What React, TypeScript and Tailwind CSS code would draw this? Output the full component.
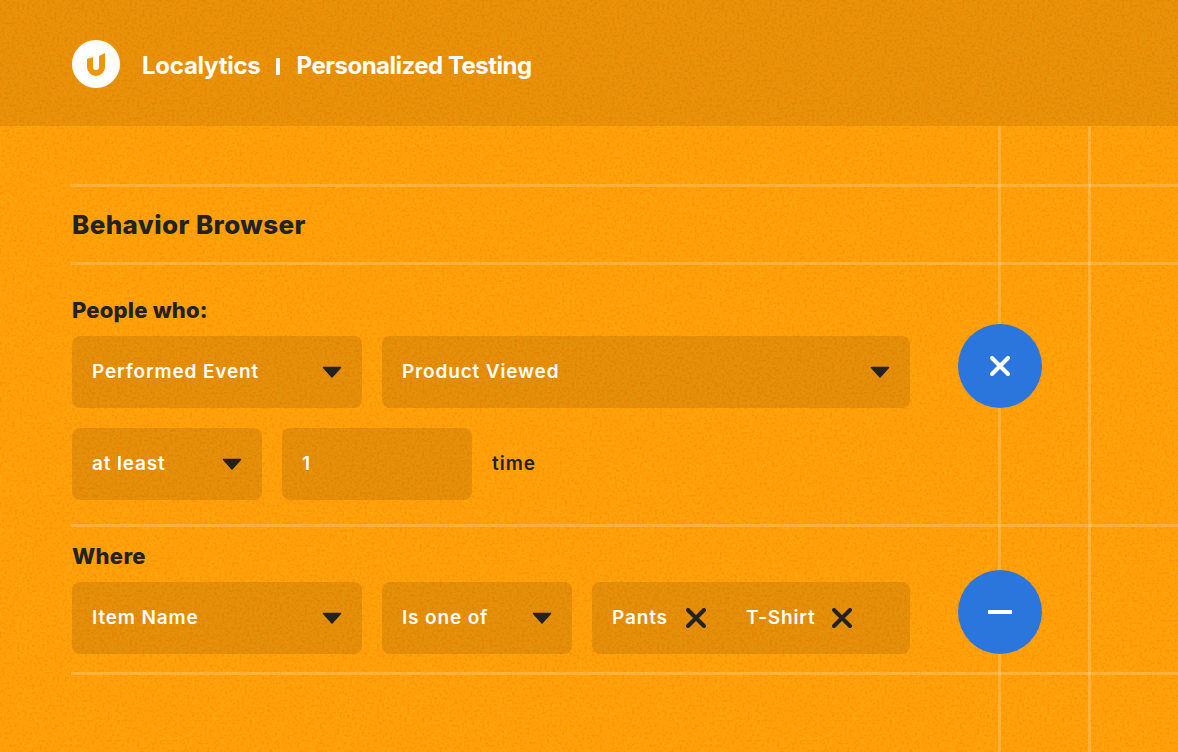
import React from 'react';

const fontFamily = 'font-["Inter",_"Liberation_Sans",_sans-serif]';

const Caret = () => (
  <svg width="20" height="12" viewBox="0 0 20 12" className="shrink-0">
    <path d="M1.500 1.500h17L10 11z" fill="#222222" stroke="#222222" strokeWidth="1.500" strokeLinejoin="round" />
  </svg>
);

const Cross = ({ color = '#222222' }: { color?: string }) => (
  <svg width="20" height="20" viewBox="0 0 20 20" className="shrink-0">
    <path d="M2 2l16 16M18 2L2 18" stroke={color} strokeWidth="4" strokeLinecap="round" fill="none" />
  </svg>
);

const Select = ({ label, width }: { label: string; width: string }) => (
  <div className={`${width} h-[72px] rounded-lg bg-black/[0.11] flex items-center justify-between pl-5 pr-5`}>
    <span className="text-[19px] font-semibold text-white tracking-[0.85px]">{label}</span>
    <Caret />
  </div>
);

const RoundButton = ({ children }: { children: React.ReactNode }) => (
  <div className="w-[84px] h-[84px] shrink-0 rounded-full bg-[#2b76dc] flex items-center justify-center">
    {children}
  </div>
);

const Rule = () => <div className="h-[3px] bg-white/20" />;

export default function App() {
  return (
    <div className={`relative w-[1178px] h-[752px] overflow-hidden bg-[#ffa30a] text-[#222222] ${fontFamily}`}>
      {/* paper grain under the content, tinted so it darkens without greying */}
      <svg className="absolute inset-0 pointer-events-none opacity-25" width="1178" height="752">
        <filter id="grain" x="0" y="0" width="100%" height="100%" colorInterpolationFilters="sRGB">
          <feTurbulence type="fractalNoise" baseFrequency="0.4" numOctaves="3" seed="4" />
          <feColorMatrix type="matrix" values="0 0 0 0 1  0 0 0 0 0.38  0 0 0 0 0  0 0 0 3 -1.300" />
        </filter>
        <rect width="1178" height="752" filter="url(#grain)" />
      </svg>

      {/* page grid lines */}
      <div className="absolute top-[126px] bottom-0 left-[998px] w-[3px] bg-white/20" />
      <div className="absolute top-[126px] bottom-0 left-[1088px] w-[3px] bg-white/20" />

      <header className="relative h-[126px] bg-black/[0.09] pl-[72px] pt-10 flex items-start gap-[22px]">
        <div className="w-12 h-12 rounded-full bg-white flex items-center justify-center">
          <svg width="20" height="24" viewBox="0 0 20 24" className="mt-[2px]">
            <path d="M1 6l6-2v10a3 3 0 0 0 6 0V3l6-3v14a9 9 0 0 1-18 0z" fill="#ec9600" />
          </svg>
        </div>
        <div className="h-[52px] flex items-center text-[24px] font-bold text-white">
          <span className="tracking-[-0.25px]">Localytics</span>
          <span className="w-1 h-[17px] bg-white ml-[15px] mr-[17px]" />
          <span className="tracking-[-0.5px]">Personalized Testing</span>
        </div>
      </header>

      <main className="relative pl-[71px] pt-[58px]">
        <Rule />
        <h1 className="h-[75px] pl-px flex items-center text-[26px] font-extrabold tracking-[0.4px]">Behavior Browser</h1>
        <Rule />

        <section className="pl-px pt-[33px] pb-6 flex items-end gap-12">
          <div className="w-[838px]">
            <div className="text-[22px] leading-6 font-extrabold tracking-[0.2px] mb-[14px]">People who:</div>
            <div className="flex gap-5">
              <Select label="Performed Event" width="w-[290px]" />
              <Select label="Product Viewed" width="w-[528px]" />
            </div>
          </div>
          <RoundButton>
            <Cross color="#ffffff" />
          </RoundButton>
        </section>
        <div className="pl-px pb-6 -mt-1 flex items-center gap-5">
          <Select label="at least" width="w-[190px]" />
          <div className="w-[190px] h-[72px] rounded-lg bg-black/[0.11] flex items-center pl-5 text-[19px] font-semibold text-white">1</div>
          <span className="text-[19px] font-semibold tracking-[1px]">time</span>
        </div>
        <Rule />

        <section className="pl-px pt-[17px] pb-[18px] flex items-end gap-12">
          <div className="w-[838px]">
            <div className="text-[22px] leading-6 font-extrabold mb-[14px] tracking-[0.3px]">Where</div>
            <div className="flex gap-5">
              <Select label="Item Name" width="w-[290px]" />
              <Select label="Is one of" width="w-[190px]" />
              <div className="w-[318px] h-[72px] rounded-lg bg-black/[0.11] flex items-center pl-5 text-[19px] font-semibold text-white tracking-[0.85px]">
                <span>Pants</span>
                <span className="ml-[18px]"><Cross /></span>
                <span className="ml-10">T-Shirt</span>
                <span className="ml-4"><Cross /></span>
              </div>
            </div>
          </div>
          <RoundButton>
            <div className="w-6 h-1 bg-white" />
          </RoundButton>
        </section>
        <Rule />
      </main>
    </div>
  );
}
